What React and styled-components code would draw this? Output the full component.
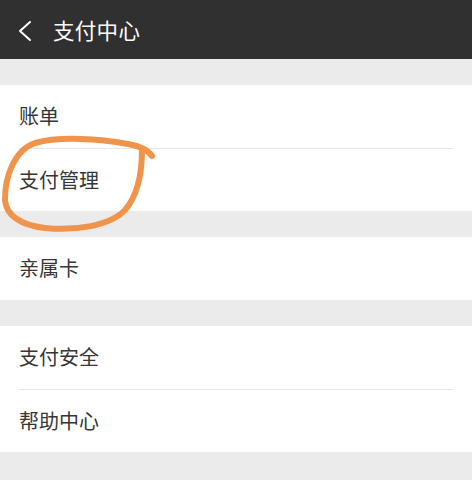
import styled, { createGlobalStyle } from "styled-components";

const GlobalStyle = createGlobalStyle`
  html, body {
    margin: 0;
    padding: 0;
    background: #ebebeb;
  }
  body {
    font-family: "Noto Sans CJK SC", "Noto Sans", sans-serif;
  }
`;

const groups = [
  ["账单", "支付管理"],
  ["亲属卡"],
  ["支付安全", "帮助中心"],
];

const App = () => {
  return (
    <Page>
      <GlobalStyle />
      <Header>
        <Back viewBox="0 0 16 22" aria-hidden="true">
          <path d="M13 2 L3 11 L13 20" />
        </Back>
        <Title>支付中心</Title>
      </Header>
      <List>
        {groups.map((g, i) => (
          <Group key={i}>
            {g.map((label, j) => (
              <Row key={label} $divider={j > 0}>
                {label}
              </Row>
            ))}
          </Group>
        ))}
      </List>
      <Mark viewBox="0 0 160 240" aria-hidden="true">
        <path d="M152 156 C148 150 140 146 128 144 C100 139 60 136 35 143 C15 150 5 175 5 200 C6 215 20 225 45 228 C75 231 110 226 125 210 C138 195 142 175 142 150" />
      </Mark>
    </Page>
  );
};

const Page = styled.div`
  position: relative;
  width: 472px;
  min-height: 480px;
  background: #ebebeb;
  overflow: hidden;
`;

const Header = styled.div`
  height: 59px;
  background: #303030;
  display: flex;
  align-items: center;
  padding-left: 17px;
  box-sizing: border-box;
`;

const Back = styled.svg`
  width: 16px;
  height: 22px;
  margin-top: 2px;
  fill: none;
  stroke: #ffffff;
  stroke-width: 2;
  stroke-linecap: round;
  stroke-linejoin: round;
`;

const Title = styled.h1`
  margin: 0 0 0 20px;
  font-size: 21.5px;
  font-weight: 400;
  color: #ffffff;
  letter-spacing: 0.3px;
`;

const List = styled.div`
  display: flex;
  flex-direction: column;
  gap: 26px;
  padding-top: 26px;
`;

const Group = styled.div`
  background: #ffffff;
  display: flex;
  flex-direction: column;
`;

const Row = styled.div`
  height: 63px;
  margin: 0 19px 0 19px;
  display: flex;
  align-items: center;
  font-size: 20px;
  color: #363636;
  border-top: ${(p) => (p.$divider ? "1px solid #e6e6e6" : "none")};
  box-sizing: border-box;
  padding-bottom: 2px;
`;

const Mark = styled.svg`
  position: absolute;
  left: 0;
  top: 0;
  width: 160px;
  height: 240px;
  fill: none;
  stroke: #f0944c;
  stroke-width: 6;
  stroke-linecap: round;
  stroke-linejoin: round;
`;

export default App;
